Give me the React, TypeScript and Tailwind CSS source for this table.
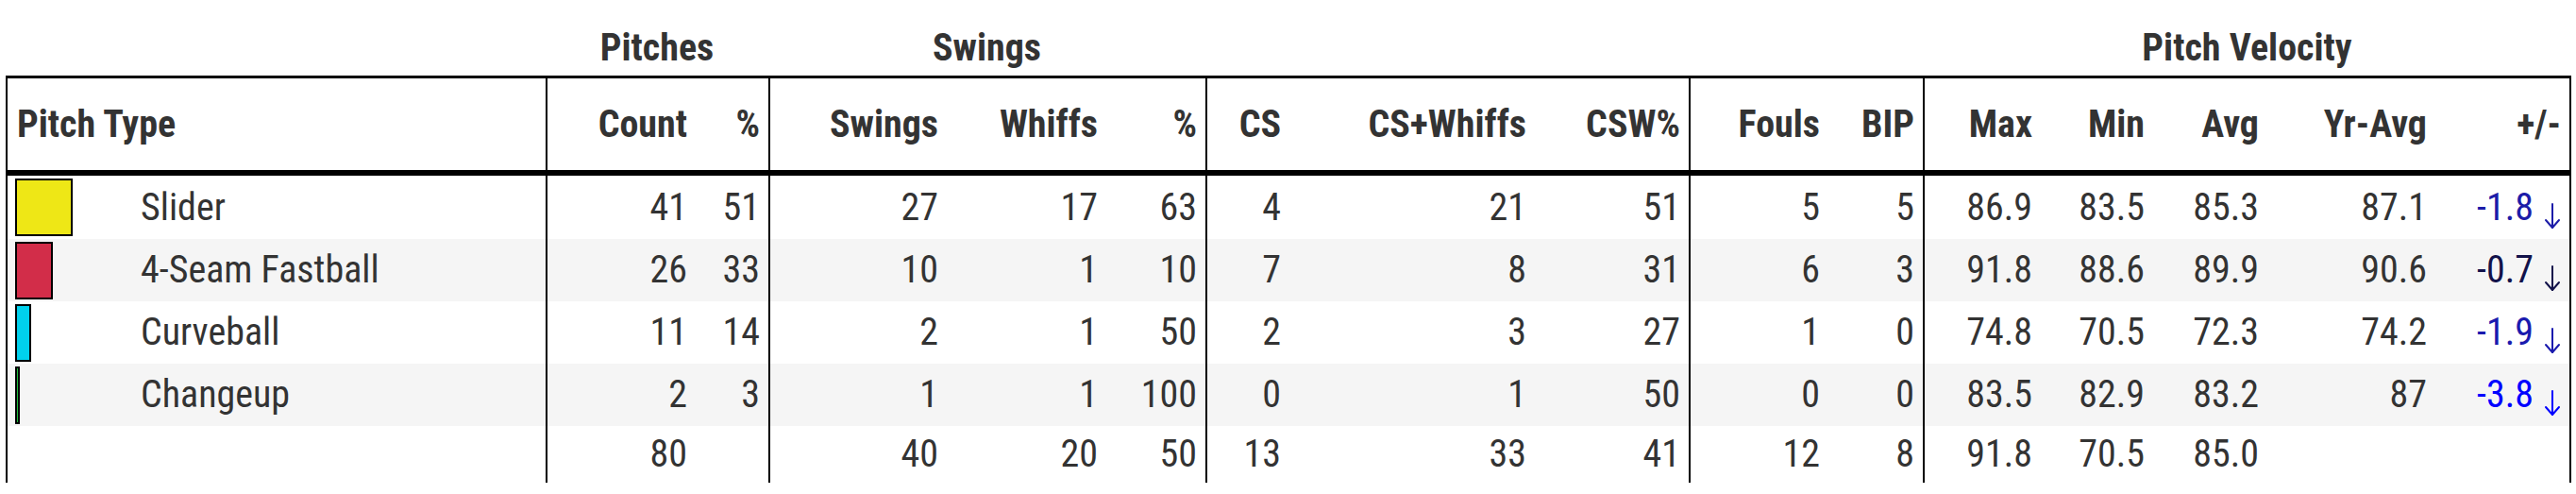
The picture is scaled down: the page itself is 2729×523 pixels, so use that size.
import React from 'react'

type PitchRow = {
    name: string;
    color: string;
    count: number;
    pct: number;
    swings: number;
    whiffs: number;
    whiffPct: number;
    cs: number;
    csWhiffs: number;
    csw: number;
    fouls: number;
    bip: number;
    max: string;
    min: string;
    avg: string;
    yrAvg: string;
    diff: string;
    diffColor: string;
};

const PITCHES: PitchRow[] = [
    { name: "Slider", color: "#EEE716", count: 41, pct: 51, swings: 27, whiffs: 17, whiffPct: 63, cs: 4, csWhiffs: 21, csw: 51, fouls: 5, bip: 5, max: "86.9", min: "83.5", avg: "85.3", yrAvg: "87.1", diff: "-1.8", diffColor: "#1c1ca8" },
    { name: "4-Seam Fastball", color: "#D22D49", count: 26, pct: 33, swings: 10, whiffs: 1, whiffPct: 10, cs: 7, csWhiffs: 8, csw: 31, fouls: 6, bip: 3, max: "91.8", min: "88.6", avg: "89.9", yrAvg: "90.6", diff: "-0.7", diffColor: "#12124a" },
    { name: "Curveball", color: "#00D1ED", count: 11, pct: 14, swings: 2, whiffs: 1, whiffPct: 50, cs: 2, csWhiffs: 3, csw: 27, fouls: 1, bip: 0, max: "74.8", min: "70.5", avg: "72.3", yrAvg: "74.2", diff: "-1.9", diffColor: "#1a1aae" },
    { name: "Changeup", color: "#1DBE3A", count: 2, pct: 3, swings: 1, whiffs: 1, whiffPct: 100, cs: 0, csWhiffs: 1, csw: 50, fouls: 0, bip: 0, max: "83.5", min: "82.9", avg: "83.2", yrAvg: "87", diff: "-3.8", diffColor: "#0000ff" },
];

// 16 columns, widths measured off the screenshot (inside the outer border)
const COLS = "grid grid-cols-[570px_159px_77px_189px_169px_105px_89px_260px_163px_148px_100px_125px_119px_121px_178px_142px]";
const FONT = "font-['Roboto_Condensed',Roboto,sans-serif] font-stretch-condensed";

const num = "flex items-center justify-end pr-[9px]";
const sep = "border-l-2 border-black";

const Cell = ({ children, divider = false, last = false }: { children?: React.ReactNode; divider?: boolean; last?: boolean }) => (
    <div className={`${num} ${divider ? sep : ''} ${last ? 'pr-[5px]' : ''}`}>{children}</div>
);

const DownArrow = ({ color }: { color: string }) => (
    <svg width="18" height="28" viewBox="0 0 18 28" className="ml-[11px] translate-y-[9px]" fill="none" stroke={color} strokeWidth="2" strokeLinecap="round" strokeLinejoin="round">
        <path d="M9 1v25" />
        <path d="M2 18l7 8 7-8" />
    </svg>
);

const App = () => {
    return (
        <div className={`w-[2729px] h-[523px] bg-white text-[#333] text-[40px] leading-none ${FONT}`}>
            <div className="ml-[6px] w-[2718px]">
                {/* group headers, no borders */}
                <div className="grid grid-cols-[572px_236px_463px_512px_248px_687px] h-[80px] font-bold">
                    <div />
                    <div className="flex items-end justify-center pb-[9px]">Pitches</div>
                    <div className="flex items-end justify-center pb-[9px]">Swings</div>
                    <div />
                    <div />
                    <div className="flex items-end justify-center pb-[9px]">Pitch Velocity</div>
                </div>

                <div className="border-t-[3px] border-x-2 border-black">
                    {/* column headers */}
                    <div className={`${COLS} h-[103px] border-b-[6px] border-black font-bold`}>
                        <div className="flex items-center pl-[10px]">Pitch Type</div>
                        <Cell divider>Count</Cell>
                        <Cell>%</Cell>
                        <Cell divider>Swings</Cell>
                        <Cell>Whiffs</Cell>
                        <Cell>%</Cell>
                        <Cell divider>CS</Cell>
                        <Cell>CS+Whiffs</Cell>
                        <Cell>CSW%</Cell>
                        <Cell divider>Fouls</Cell>
                        <Cell>BIP</Cell>
                        <Cell divider>Max</Cell>
                        <Cell>Min</Cell>
                        <Cell>Avg</Cell>
                        <Cell>Yr-Avg</Cell>
                        <Cell last>+/-</Cell>
                    </div>

                    {PITCHES.map((p, i) => (
                        <div key={p.name} className={`${COLS} ${i === 0 ? 'h-[67px]' : 'h-[66px]'} ${i % 2 === 1 ? 'bg-[#f5f5f5]' : 'bg-white'}`}>
                            <div className="flex items-center pl-[8px]">
                                <div className="w-[133px] flex items-center">
                                    <div
                                        className="h-[61px] border-2 border-black"
                                        style={{ width: Math.max(5, Math.round(p.pct * 1.2)), backgroundColor: p.color }}
                                    />
                                </div>
                                <span>{p.name}</span>
                            </div>
                            <Cell divider>{p.count}</Cell>
                            <Cell>{p.pct}</Cell>
                            <Cell divider>{p.swings}</Cell>
                            <Cell>{p.whiffs}</Cell>
                            <Cell>{p.whiffPct}</Cell>
                            <Cell divider>{p.cs}</Cell>
                            <Cell>{p.csWhiffs}</Cell>
                            <Cell>{p.csw}</Cell>
                            <Cell divider>{p.fouls}</Cell>
                            <Cell>{p.bip}</Cell>
                            <Cell divider>{p.max}</Cell>
                            <Cell>{p.min}</Cell>
                            <Cell>{p.avg}</Cell>
                            <Cell>{p.yrAvg}</Cell>
                            <Cell last>
                                <span style={{ color: p.diffColor }}>{p.diff}</span>
                                <DownArrow color={p.diffColor} />
                            </Cell>
                        </div>
                    ))}

                    {/* totals */}
                    <div className={`${COLS} h-[60px]`}>
                        <div />
                        <Cell divider>80</Cell>
                        <Cell />
                        <Cell divider>40</Cell>
                        <Cell>20</Cell>
                        <Cell>50</Cell>
                        <Cell divider>13</Cell>
                        <Cell>33</Cell>
                        <Cell>41</Cell>
                        <Cell divider>12</Cell>
                        <Cell>8</Cell>
                        <Cell divider>91.8</Cell>
                        <Cell>70.5</Cell>
                        <Cell>85.0</Cell>
                        <Cell />
                        <Cell last />
                    </div>
                </div>
            </div>
        </div>
    )
}

export default App;
